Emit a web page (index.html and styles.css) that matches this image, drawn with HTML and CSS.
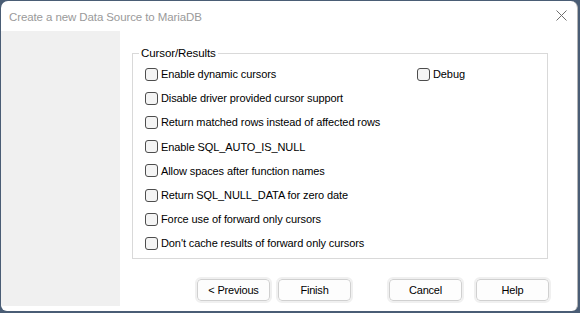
FILE: index.html
```html
<!DOCTYPE html>
<html lang="en">
<head>
    <meta charset="UTF-8">
    <title>Create a new Data Source to MariaDB</title>
    <link rel="stylesheet" href="styles.css">
</head>
<body>
    <div class="window">
        <div class="titlebar">
            <span class="title">Create a new Data Source to MariaDB</span>
            <svg class="close" width="11" height="11" viewBox="0 0 11 11">
                <path d="M0.5 0.5 L10.5 10.5 M10.5 0.5 L0.5 10.5" stroke="#6e6e6e" stroke-width="1" fill="none"/>
            </svg>
        </div>
        <div class="body">
            <div class="side"></div>
            <div class="main">
                <fieldset class="group">
                    <legend>Cursor/Results</legend>
                    <div class="row">
                        <label class="opt first"><span class="box"></span>Enable dynamic cursors</label>
                        <label class="opt"><span class="box"></span>Debug</label>
                    </div>
                    <div class="row"><label class="opt"><span class="box"></span>Disable driver provided cursor support</label></div>
                    <div class="row"><label class="opt"><span class="box"></span>Return matched rows instead of affected rows</label></div>
                    <div class="row"><label class="opt"><span class="box"></span>Enable SQL_AUTO_IS_NULL</label></div>
                    <div class="row"><label class="opt"><span class="box"></span>Allow spaces after function names</label></div>
                    <div class="row"><label class="opt"><span class="box"></span>Return SQL_NULL_DATA for zero date</label></div>
                    <div class="row"><label class="opt"><span class="box"></span>Force use of forward only cursors</label></div>
                    <div class="row"><label class="opt"><span class="box"></span>Don't cache results of forward only cursors</label></div>
                </fieldset>
                <div class="buttons">
                    <span class="btn">&lt; Previous</span>
                    <span class="btn">Finish</span>
                    <span class="btn cancel">Cancel</span>
                    <span class="btn help">Help</span>
                </div>
            </div>
        </div>
    </div>
</body>
</html>
```

FILE: styles.css
```css
body {
    margin: 0;
    width: 580px;
    height: 313px;
    overflow: hidden;
    background: #4a5d75;
    font-family: "Liberation Sans", Arial, sans-serif;
}

.window {
    margin: 1px 2px 0 1px;
    height: 310px;
    background-color: #fff;
    border-radius: 7px 7px 6px 6px;
    border-right: 1px solid #b4b4b4;
    display: flex;
    flex-direction: column;
}

.titlebar {
    height: 30px;
    display: flex;
    align-items: center;
    padding-left: 8px;
    padding-right: 10px;
}

.title {
    font-size: 11.5px;
    letter-spacing: -0.1px;
    color: #9a9a9a;
    flex: 1;
    margin-top: 1px;
}

.close {
    margin-top: -1px;
}

.body {
    display: flex;
    height: 275px;
}

.side {
    width: 119px;
    background-color: #f0f0f0;
}

.main {
    flex: 1;
    padding: 14px 0 0 12px;
}

.group {
    margin: 0;
    width: 414px;
    padding: 1px 0 2px 0;
    border: 1px solid #d9d9d9;
    font-size: 11px;
    letter-spacing: -0.1px;
    color: #000;
}

.group legend {
    margin-left: 6px;
    padding: 0 2px;
    font-size: 11.5px;
    line-height: 16px;
    letter-spacing: -0.1px;
}

.row {
    height: 24.2px;
    padding-left: 12px;
    display: flex;
    align-items: center;
}

.opt {
    display: flex;
    align-items: center;
}

.opt.first {
    width: 272px;
}

.box {
    width: 11px;
    height: 11px;
    border: 1px solid #4d4d4d;
    border-radius: 3px;
    background-color: #f4f4f4;
    margin-right: 3px;
}

.buttons {
    display: flex;
    padding-left: 65px;
    margin-top: 20px;
}

.btn {
    width: 71px;
    height: 20px;
    line-height: 20px;
    text-align: center;
    font-size: 11px;
    letter-spacing: -0.2px;
    border: 1px solid #d0d0d0;
    border-radius: 4px;
    background-color: #fdfdfd;
    outline: 2px solid #f0f0f0;
    margin-right: 8px;
}

.btn.cancel {
    margin-left: 30px;
    margin-right: 14px;
}
```
